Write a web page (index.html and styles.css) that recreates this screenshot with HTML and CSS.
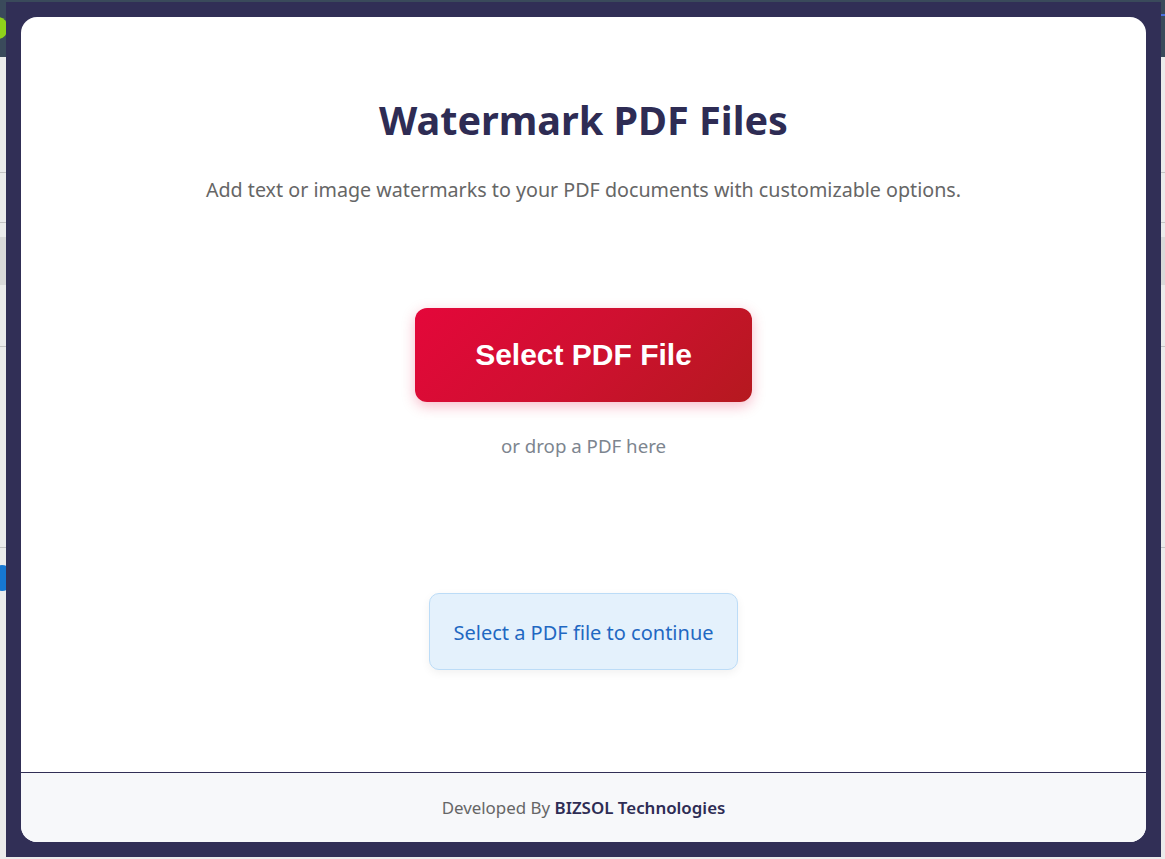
FILE: index.html
```html
<!DOCTYPE html>
<html lang="en">
<head>
<meta charset="utf-8">
<title>Watermark PDF Files</title>
<link rel="stylesheet" href="styles.css">
</head>
<body>
<div class="page">
  <header class="topbar">
    <span class="logo-blob"></span>
    <span class="topbar-line"></span>
  </header>
  <div class="page-body">
    <div class="rule r1"></div>
    <div class="rule r2"></div>
    <div class="shade"></div>
    <div class="rule r3"></div>
    <div class="rule r4"></div>
    <div class="dot-row"><span class="dot"></span></div>
  </div>
</div>

<div class="overlay">
  <div class="modal">
    <main class="modal-main">
      <h1 class="title">Watermark PDF Files</h1>
      <p class="subtitle">Add text or image watermarks to your PDF documents with customizable options.</p>
      <button class="select-btn" type="button">Select PDF File</button>
      <p class="drop-hint">or drop a PDF here</p>
      <div class="info-box">Select a PDF file to continue</div>
    </main>
    <footer class="modal-footer">
      <p class="credit">Developed By <strong class="brand">BIZSOL Technologies</strong></p>
    </footer>
  </div>
</div>
</body>
</html>
```

FILE: styles.css
```css
* { box-sizing: border-box; }

html, body {
  margin: 0;
  padding: 0;
  height: 100%;
}

body {
  background: #ebebeb;
  font-family: "Noto Sans", "Open Sans", sans-serif;
  overflow: hidden;
}

/* background page */
.page {
  height: 100%;
  display: flex;
  flex-direction: column;
}

.topbar {
  height: 57px;
  background: #3a4a5b;
  position: relative;
  flex: none;
}

.logo-blob {
  position: absolute;
  left: -12px;
  top: 17px;
  width: 20px;
  height: 22px;
  border-radius: 50%;
  background: #8fd11a;
}

.topbar-line {
  position: absolute;
  right: 0;
  top: 14px;
  width: 6px;
  height: 2px;
  background: #4a6ee0;
}

.page-body {
  flex: 1;
  display: flex;
  flex-direction: column;
}

.rule {
  height: 1px;
  background: #c4c4c4;
}

.r1 { margin-top: 115px; }
.r2 { margin-top: 49px; }

.shade {
  margin-top: 14px;
  height: 48px;
  background: #d9d9d9;
}

.r3 { margin-top: 61px; }
.r4 { margin-top: 200px; }

.dot-row {
  margin-top: 17px;
  height: 26px;
  position: relative;
}

.dot {
  position: absolute;
  left: -10px;
  top: 0;
  width: 24px;
  height: 26px;
  border-radius: 50%;
  background: #1677d2;
}

/* modal overlay */
.overlay {
  position: fixed;
  left: 6px;
  top: 2px;
  width: 1155px;
  height: 855px;
  background: #312f56;
  padding: 15px;
  display: flex;
}

.modal {
  flex: 1;
  background: #ffffff;
  border-radius: 16px;
  display: flex;
  flex-direction: column;
  overflow: hidden;
}

.modal-main {
  flex: 1;
  display: flex;
  flex-direction: column;
  align-items: center;
  padding-top: 80px;
}

.title {
  margin: 0;
  font-size: 39.6px;
  line-height: 46px;
  font-weight: 700;
  color: #2e2c54;
}

.subtitle {
  margin: 33px 0 0;
  font-size: 19.7px;
  line-height: 28px;
  color: #666666;
}

.select-btn {
  margin-top: 104px;
  width: 337px;
  height: 94px;
  border: none;
  border-radius: 12px;
  background: linear-gradient(135deg, #e4073a 0%, #cf1030 50%, #b5191f 100%);
  color: #ffffff;
  font-family: "Liberation Sans", Arial, sans-serif;
  font-weight: 700;
  font-size: 30px;
  box-shadow: 0 4px 14px rgba(228, 7, 58, 0.28);
  cursor: pointer;
}

.drop-hint {
  margin: 32px 0 0;
  font-size: 18.7px;
  line-height: 24px;
  color: #7d858f;
}

.info-box {
  margin-top: 135px;
  width: 309px;
  height: 77px;
  display: flex;
  align-items: center;
  justify-content: center;
  background: #e4f1fc;
  border: 1px solid #bcdcf7;
  border-radius: 10px;
  color: #1f68c2;
  font-size: 20px;
  padding-top: 2px;
  box-shadow: 0 3px 10px rgba(0, 0, 0, 0.06);
}

.modal-footer {
  flex: none;
  height: 70px;
  border-top: 1px solid #312f56;
  background: #f7f8fa;
  display: flex;
  align-items: center;
  justify-content: center;
}

.credit {
  margin: 0;
  font-size: 16.9px;
  line-height: 24px;
  color: #666666;
}

.brand {
  font-weight: 600;
  color: #2e2c54;
}
```
